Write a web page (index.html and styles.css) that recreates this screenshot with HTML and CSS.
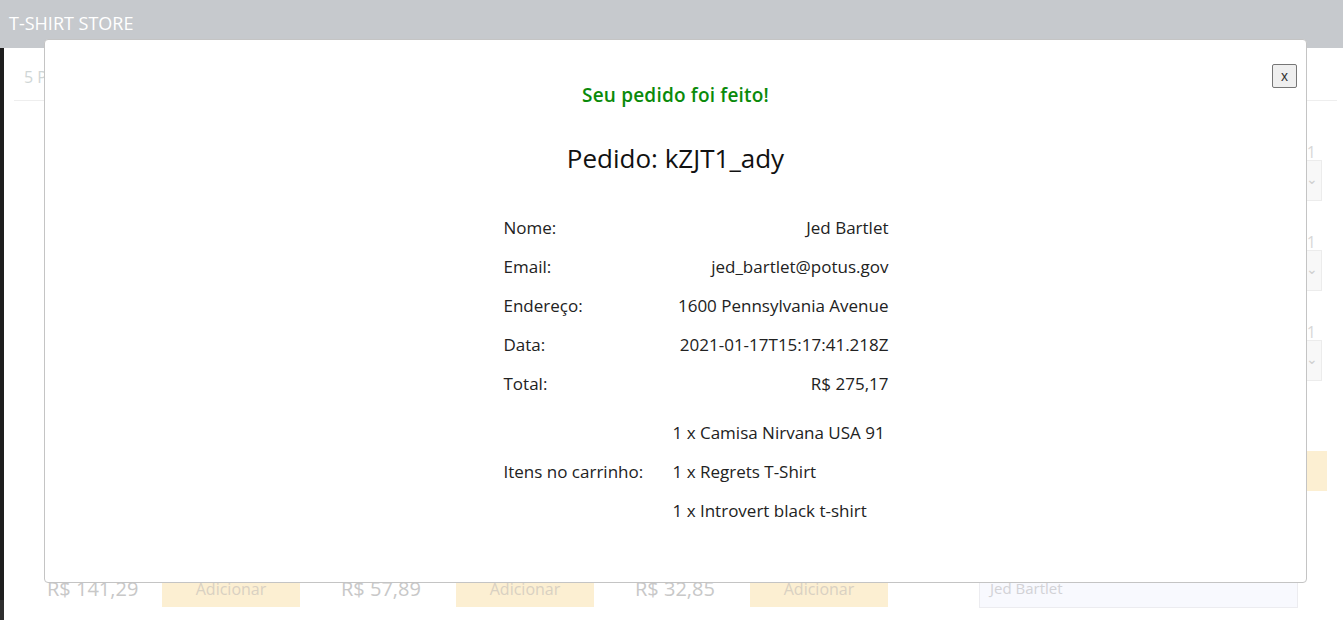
FILE: index.html
```html
<!DOCTYPE html>
<html lang="pt-BR">
<head>
<meta charset="utf-8">
<title>T-Shirt Store</title>
<link rel="stylesheet" href="styles.css">
</head>
<body>
<header class="topbar">T-SHIRT STORE</header>
<div class="page">
  <div class="strip"></div>
  <main class="content">
    <div class="summary">5 Produtos</div>
    <div class="layout">
      <section class="products">
        <div class="product">
          <span class="price">R$ 141,29</span>
          <span class="add">Adicionar</span>
        </div>
        <div class="product">
          <span class="price">R$ 57,89</span>
          <span class="add">Adicionar</span>
        </div>
        <div class="product">
          <span class="price">R$ 32,85</span>
          <span class="add">Adicionar</span>
        </div>
      </section>
      <aside class="cart">
        <div class="cart-item">
          <span class="qty">1</span>
          <div class="select">⌄</div>
        </div>
        <div class="cart-item">
          <span class="qty">1</span>
          <div class="select">⌄</div>
        </div>
        <div class="cart-item">
          <span class="qty">1</span>
          <div class="select">⌄</div>
        </div>
        <div class="checkout"></div>
        <div class="input">Jed Bartlet</div>
      </aside>
    </div>
  </main>
</div>

<div class="modal">
  <button class="close">x</button>
  <h3 class="success">Seu pedido foi feito!</h3>
  <h2 class="order">Pedido: kZJT1_ady</h2>
  <div class="details">
    <div class="grid">
      <span class="label">Nome:</span><span class="value">Jed Bartlet</span>
      <span class="label">Email:</span><span class="value">jed_bartlet@potus.gov</span>
      <span class="label">Endereço:</span><span class="value">1600 Pennsylvania Avenue</span>
      <span class="label">Data:</span><span class="value">2021-01-17T15:17:41.218Z</span>
      <span class="label">Total:</span><span class="value">R$ 275,17</span>
      <span class="label items-label">Itens no carrinho:</span>
      <div class="items">
        <span>1 x Camisa Nirvana USA 91</span>
        <span>1 x Regrets T-Shirt</span>
        <span>1 x Introvert black t-shirt</span>
      </div>
    </div>
  </div>
</div>
</body>
</html>
```
FILE: styles.css
```css
* { box-sizing: border-box; }
html, body { margin: 0; padding: 0; }
body {
  font-family: "Open Sans", "Noto Sans", sans-serif;
  background: #ffffff;
  height: 620px;
  overflow: hidden;
}
.topbar {
  height: 48px;
  background: #c6c9cd;
  color: #ffffff;
  font-size: 18px;
  line-height: 46px;
  padding-left: 9px;
}
.page {
  display: flex;
  height: 572px;
}
.strip {
  width: 4px;
  background: linear-gradient(#1e1e1e 0, #1e1e1e 552px, #2e2e2e 552px);
  flex: none;
}
.content {
  flex: 1;
  padding: 0 6px 0 10px;
}
.summary {
  height: 53px;
  border-bottom: 1px solid #eeeeee;
  color: #cfd6d6;
  font-size: 16px;
  line-height: 58px;
  padding-left: 10px;
}
.layout {
  display: flex;
  justify-content: space-between;
  height: 519px;
}
.products {
  display: flex;
  align-items: flex-end;
  padding-left: 33px;
  padding-bottom: 13px;
}
.product {
  width: 294px;
  display: flex;
  align-items: center;
}
.price {
  width: 115px;
  color: #c8c8c8;
  font-size: 20px;
}
.add {
  width: 138px;
  height: 37px;
  background: #fcefd2;
  color: #d9d1c2;
  font-size: 16px;
  display: flex;
  align-items: center;
  justify-content: center;
}
.cart {
  width: 348px;
  margin-right: 10px;
  padding-top: 44px;
  display: flex;
  flex-direction: column;
  align-items: flex-start;
}
.cart-item {
  width: 343px;
  display: flex;
  flex-direction: column;
  align-items: flex-end;
  margin-bottom: 34px;
}
.qty {
  color: #d8d8d8;
  font-size: 16px;
  line-height: 14px;
  padding-right: 6px;
  height: 15px;
}
.select {
  width: 343px;
  height: 41px;
  background: #f8f8f8;
  border: 1px solid #ececec;
  color: #d0d0d0;
  font-size: 14px;
  line-height: 36px;
  padding-left: 326px;
}
.checkout {
  width: 348px;
  height: 40px;
  background: #fcefd2;
  margin-top: 36px;
}
.input {
  margin-top: 80px;
  width: 319px;
  height: 37px;
  background: #f8f9fe;
  border: 1px solid #ececf0;
  color: #d2d2d6;
  font-size: 15px;
  line-height: 33px;
  padding-left: 10px;
}

.modal {
  position: fixed;
  left: 44px;
  top: 39px;
  width: 1263px;
  height: 544px;
  background: #ffffff;
  border: 1px solid #c4c4c4;
  border-radius: 4px;
  padding-top: 43px;
  color: #222222;
}
.close {
  position: absolute;
  top: 24px;
  right: 9px;
  width: 25px;
  height: 24px;
  border: 1px solid #767676;
  border-radius: 2px;
  background: #efefef;
  color: #333333;
  font-family: "Liberation Sans", Arial, sans-serif;
  font-size: 14px;
  padding: 0;
}
.success {
  margin: 0;
  text-align: center;
  color: #0a8a0a;
  font-size: 19px;
  letter-spacing: 0.2px;
  font-weight: 600;
  line-height: 24px;
}
.order {
  margin: 36px 0 0;
  text-align: center;
  color: #111111;
  font-size: 26px;
  font-weight: 400;
  line-height: 30px;
}
.details {
  display: flex;
  justify-content: center;
  padding-left: 41px;
  margin-top: 35px;
}
.grid {
  display: grid;
  grid-template-columns: 169px 216px;
  font-size: 17px;
  color: #222222;
}
.label, .value {
  line-height: 39px;
}
.value { text-align: right; }
.items-label {
  align-self: center;
  margin-top: 10px;
}
.items {
  display: flex;
  flex-direction: column;
  margin-top: 10px;
}
.items span { line-height: 39px; }
```
